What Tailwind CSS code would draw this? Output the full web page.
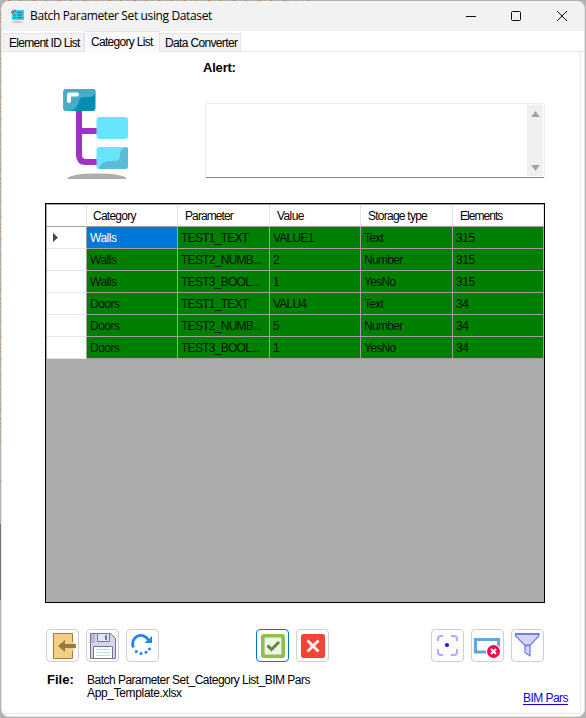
<!DOCTYPE html>
<html lang="en">
<head>
<meta charset="utf-8">
<title>Batch Parameter Set using Dataset</title>
<script src="https://cdn.jsdelivr.net/npm/@tailwindcss/browser@4"></script>
</head>
<body class="w-[586px] h-[718px] overflow-hidden bg-[#b4b2b2] pt-px pl-px font-['Liberation_Sans',Arial,sans-serif] text-[12px] leading-[14px] text-black">
<svg class="absolute left-0 top-0 w-[320px] h-[600px]" viewBox="0 0 320 600" fill="none">
  <path d="M8 .5h302" stroke="#c98f4c" stroke-dasharray="3 9 2 11"/>
  <path d="M.5 6v440M.5 480v8" stroke="#c98f4c" stroke-dasharray="1 7 1 3 1 2"/>
  <path d="M.5 524v76" stroke="#77776f"/>
</svg>
<div class="relative w-[584px] h-[716px] rounded-[8px] overflow-hidden bg-white border border-[#e6e4e4] border-t-[#f3f2f3] flex flex-col">
  <header class="h-[29px] shrink-0 bg-[#f3f2f3] flex items-center pb-[2px]">
    <svg class="ml-[9px] w-[13px] h-[14px] shrink-0" viewBox="0 0 13 14">
      <rect x="1" y="1" width="12" height="10" fill="#35cdee"/>
      <path d="M6 3.5h5M6 6h5M6 8.5h5M2.5 6h2M2.5 8.5h2" stroke="#146f91"/>
      <path d="M0 2.5l1.5 1.5L4.5 .7" fill="none" stroke="#e33b45" stroke-width="1.3"/>
      <ellipse cx="6.5" cy="13" rx="6" ry=".8" fill="#b8b8b8"/>
    </svg>
    <h1 class="ml-[6px] w-[200px] whitespace-nowrap font-['Open_Sans','Noto_Sans',sans-serif] text-[12px] tracking-[-0.37px]">Batch Parameter Set using Dataset</h1>
    <svg class="ml-[234px] w-[110px] h-[12px] shrink-0" viewBox="0 0 110 12" fill="none" stroke="#111">
      <path d="M2 6.5h10"/><rect x="47.5" y="1.500" width="9" height="9" rx="1"/><path d="M93 1l10 10M103 1L93 11"/>
    </svg>
  </header>
  <nav class="h-[21px] shrink-0 flex items-end pl-px border-b border-[#e5e5e5] whitespace-nowrap">
    <div class="w-[81px] h-[18px] bg-[#f3f3f3] border border-b-0 border-[#e5e5e5] pl-[5px] pt-[2px] tracking-[-0.72px]">Element ID List</div>
    <div class="w-[76px] h-[21px] -mb-px bg-[#fafafa] border border-b-0 border-[#e5e5e5] pl-[6px] pt-[3px] tracking-[-0.7px] z-10">Category List</div>
    <div class="w-[81px] h-[18px] bg-[#f3f3f3] border border-b-0 border-l-0 border-[#e5e5e5] pl-[5px] pt-[2px] tracking-[-0.65px]">Data Converter</div>
  </nav>
  <main class="flex-1 mr-[3px] mb-[2px] border-r border-b border-[#e9e9e9] pl-[43px]">
    <section class="flex h-[151px]">
      <svg class="w-[66px] h-[94px] ml-[17px] mt-[35px] shrink-0" viewBox="0 0 66 94">
        <path d="M18 22v45q0 7 7 7h11M18 43h20" transform="translate(-1 1)" fill="none" stroke="#9b34c4" stroke-width="6"/>
        <rect x="1.500" y="2" width="32" height="22" rx="3" fill="#008fb3"/>
        <path d="M4.500 2h26q3 0 3 2-1 6-6 6h-5q-6 0-6 6-2 7-10 8h-2q-3 0-3-3V5q0-3 3-3" fill="#48acc7"/>
        <path d="M4.500 2h25q-2 8-10 8h-5q-6 0-6 6-1 6-7 7V5q0-3 3-3" fill="#48acc7"/>
        <path d="M7 14V7.500H15" fill="none" stroke="#fff" stroke-width="4" stroke-linecap="round" stroke-linejoin="round"/>
        <rect x="34.500" y="30" width="31.500" height="22" rx="3" fill="#67e5ff"/>
        <rect x="34.500" y="60" width="31.500" height="22" rx="3" fill="#67e5ff"/>
        <path d="M66 62v17q0 3-3 3H37q2-8 10-8h5q6 0 6-6 0-7 7-8 1 1 1 2" fill="#5abcd6"/>
        <path d="M5 92q3-5.500 30-5.500t30 5.500z" fill="#adadad"/>
      </svg>
      <div class="ml-[74px] pt-[9px]">
        <div class="ml-px text-[13px] font-bold leading-[14px] tracking-[-0.2px]">Alert:</div>
        <div class="ml-[3px] mt-[28px] w-[340px] h-[75px] rounded-[2px] border border-[#ececec] border-b-[#858585] flex justify-end">
          <div class="w-[16px] h-[71px] mt-px mr-px bg-[#f0f0f0] flex flex-col justify-between items-center py-[5px]">
            <svg class="w-[9px] h-[8px]" viewBox="0 0 9 8"><path d="M4.500 1L8.500 6.500q0 .5-.5.5H1q-.5 0-.5-.5z" fill="#a3a3a3"/></svg>
            <svg class="w-[9px] h-[8px]" viewBox="0 0 9 8"><path d="M4.500 8L8.500 2.500q0-.5-.5-.5H1q-.5 0-.5.5z" fill="#a3a3a3"/></svg>
          </div>
        </div>
      </div>
    </section>
    <section class="w-[500px] h-[400px] border border-black bg-[#ababab] overflow-hidden">
      <table class="table-fixed border-separate border-spacing-0 w-[498px] border-t border-l border-[#a0a0a0] text-left whitespace-nowrap">
        <colgroup><col class="w-[40px]"><col class="w-[91px]"><col class="w-[92px]"><col class="w-[91px]"><col class="w-[92px]"><col class="w-[91px]"></colgroup>
        <thead><tr class="h-[22px] bg-white [&>th]:border-b [&>th]:border-b-[#a0a0a0] [&>th]:border-r [&>th]:border-r-[#e3e3e3] [&>th]:font-normal [&>th]:p-0 [&>th]:pl-[7px]"><th></th><th class="tracking-[-0.75px]"><span class="-ml-px">Category</span></th><th class="tracking-[-0.9px]">Parameter</th><th class="tracking-[-0.6px]">Value</th><th class="tracking-[-0.75px]">Storage type</th><th class="tracking-[-0.95px]">Elements</th></tr></thead>
        <tbody id="rows"></tbody>
      </table>
    </section>
    <section class="mt-[26px] flex gap-[7px] [&>button]:w-[33px] [&>button]:h-[33px] [&>button]:rounded-[4px] [&>button]:border [&>button]:border-[#cfcfcf] [&>button]:bg-[#fdfdfd] [&_svg]:w-[31px] [&_svg]:h-[31px] pl-px">
      <button aria-label="Import"><svg viewBox="0 0 31 31"><path d="M6.500 3.500h19v25h-19z" fill="#f4ce82" stroke="#a07c3d"/><path d="M24 12h3v9h-3z" fill="#f4ce82"/><path d="M11 16l7-6v4h11v4H18v4z" fill="#967a43"/></svg></button>
      <button aria-label="Save"><svg viewBox="0 0 31 31"><path d="M3.500 3.500h20l5 5v20h-25z" fill="#dcd0ef" stroke="#7d6c99"/><path d="M4 4h4v9H4z" fill="#c3b0dd"/><path d="M10.500 3.500h12v8h-12z" fill="#dce9ef" stroke="#667f90"/><path d="M18.500 5.500h1v4h-1z" fill="#607d8b" stroke="#607d8b"/><path d="M6.500 16.500h19v12h-19z" fill="#fff" stroke="#667f90"/><path d="M9 19.500h14M9 22.500h14M9 25.500h14" stroke="#b9dff5"/></svg></button>
      <button aria-label="Refresh"><svg viewBox="0 0 31 31"><path d="M6.500 17.500a8 8 0 0 1 14.800-7.500" fill="none" stroke="#2485ed" stroke-width="2.800"/><path d="M25 6v7h-7.500z" fill="#2485ed"/><g fill="#2485ed"><circle cx="9.300" cy="21.500" r="1.500"/><circle cx="14" cy="23.500" r="1.500"/><circle cx="19" cy="22.300" r="1.500"/><circle cx="22.500" cy="19" r="1.500"/></g></svg></button>
      <button aria-label="Apply" class="ml-[90px] border-[#0078c8]!"><svg viewBox="0 0 31 31"><rect x="5.800" y="5.800" width="20.400" height="20.400" rx="1" fill="#f0f5e7" stroke="#8bc34a" stroke-width="3.600"/><path d="M10.500 15.500l4 4 7.500-7.500" fill="none" stroke="#568c32" stroke-width="3"/></svg></button>
      <button aria-label="Cancel"><svg viewBox="0 0 31 31"><rect x="4" y="4" width="24" height="24" rx="2.500" fill="#f44336"/><path d="M10.500 10.500l11 11M21.500 10.500l-11 11" stroke="#fff0ef" stroke-width="3"/></svg></button>
      <button aria-label="Focus" class="ml-[95px]"><svg viewBox="0 0 31 31" fill="none"><path d="M6 11V9q0-3 3-3h2M19 6h3q3 0 3 3v2M25 19v3q0 3-3 3h-3M11 25H9q-3 0-3-3v-3" stroke="#b7a8ff" stroke-width="2"/><circle cx="15" cy="15" r="2.100" fill="#2512f4"/></svg></button>
      <button aria-label="Clear selection"><svg viewBox="0 0 31 31"><path d="M3.500 9.500h23V22h-23z" fill="none" stroke="#64a5dc" stroke-width="3.200"/><circle cx="21.500" cy="21.500" r="7.500" fill="#fff"/><circle cx="21.500" cy="21.500" r="6.500" fill="#ee0d50"/><path d="M19 19l5 5M24 19l-5 5" stroke="#fff" stroke-width="2"/></svg></button>
      <button aria-label="Filter"><svg viewBox="0 0 31 31"><path d="M3.600 3.700h23.200V6L18 15.200v10.600l-5-3.300v-7.300L3.600 6z" fill="#dcd3f2" stroke="#6583ed" stroke-width="1.300"/><path d="M3 4h24.400M12.500 15.300h6" stroke="#6583ed" stroke-width="1.800"/></svg></button>
    </section>
    <footer class="flex">
      <strong class="w-[40px] ml-[2px] mt-[11px] text-[13px] leading-[14px]">File:</strong>
      <p class="w-[436px] mt-[12px] leading-[13px] tracking-[-0.52px]">Batch Parameter Set_Category List_BIM Pars<br><span class="tracking-[-0.35px]">App_Template.xlsx</span></p>
      <a class="mt-[29px] whitespace-nowrap text-[#1000e8] underline underline-offset-2 tracking-[-0.55px]">BIM Pars</a>
    </footer>
  </main>
</div>
<script>
const rows = [
  ["Walls","TEST1_TEXT","VALUE1","Text","315"],
  ["Walls","TEST2_NUMB...","2","Number","315"],
  ["Walls","TEST3_BOOL...","1","YesNo","315"],
  ["Doors","TEST1_TEXT","VALU4","Text","34"],
  ["Doors","TEST2_NUMB...","5","Number","34"],
  ["Doors","TEST3_BOOL...","1","YesNo","34"]
];
const tracking = ["tracking-[-0.5px]", "tracking-[-0.72px]", "tracking-[-0.75px]", "tracking-[-0.7px]", "tracking-[-0.4px]"];
document.getElementById("rows").innerHTML = rows.map((row, i) =>
  `<tr class="h-[22px]"><td class="p-0 bg-white border-b border-b-[#e5e5e5] border-r border-r-[#a0a0a0]">${i ? "" : '<svg class="ml-[6px] w-[6px] h-[9px]" viewBox="0 0 6 9"><path d="M0 0v9l5-4.500z" fill="#444"/></svg>'}</td>` +
  row.map((text, j) => `<td class="p-0 pl-[3px] border-b border-r border-[#a0a0a0] ${i === 0 && j === 0 ? "bg-[#0078d7] text-white" : "bg-[#008000] text-[#001000]"} ${tracking[j]}">${text}</td>`).join("") + "</tr>"
).join("");
</script>
</body>
</html>
